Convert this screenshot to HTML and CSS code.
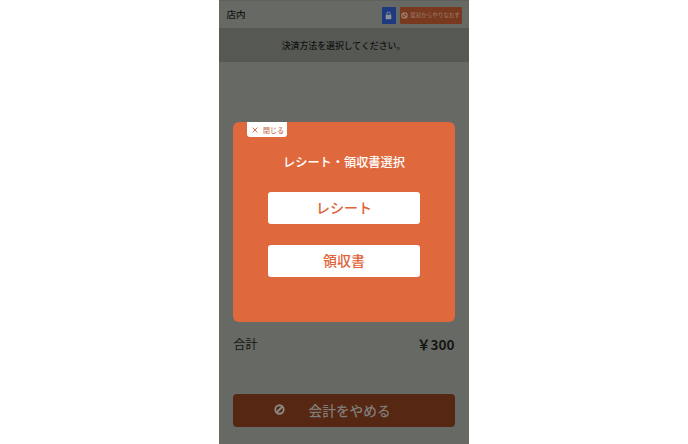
FILE: index.html
```html
<!DOCTYPE html>
<html lang="ja">
<head>
<meta charset="utf-8">
<title>レシート・領収書選択</title>
<link rel="stylesheet" href="styles.css">
</head>
<body>
<main class="phone">
  <header class="topbar">
    <span class="place">店内</span>
    <div class="top-actions">
      <span class="lock">
        <svg viewBox="0 0 10 12" width="7" height="9"><path d="M2.5 5V3.5a2.5 2.5 0 0 1 5 0V5" fill="none" stroke="#8d9096" stroke-width="1.3"/><rect x="1" y="5" width="8" height="6.5" rx="1" fill="#8d9096"/></svg>
      </span>
      <span class="restart">
        <svg viewBox="0 0 12 12" width="7" height="7"><circle cx="6" cy="6" r="4.6" fill="none" stroke="#9c7f70" stroke-width="2"/><path d="M3 3l6 6" stroke="#9c7f70" stroke-width="2"/></svg>
        最初からやりなおす
      </span>
    </div>
  </header>
  <div class="notice">決済方法を選択してください。</div>
  <div class="content">
    <section class="modal">
      <button class="close">
        <svg viewBox="0 0 10 10" width="6" height="6"><path d="M1 1l8 8M9 1l-8 8" stroke="#df6a40" stroke-width="1.6"/></svg>
        閉じる
      </button>
      <h1 class="modal-title">レシート・領収書選択</h1>
      <button class="choice">レシート</button>
      <button class="choice">領収書</button>
    </section>
    <div class="total">
      <span class="total-label">合計</span>
      <span class="total-value">￥300</span>
    </div>
    <button class="cancel">
      <svg class="cancel-icon" viewBox="0 0 12 12" width="11" height="11"><circle cx="6" cy="6" r="4.6" fill="none" stroke="#8c8a84" stroke-width="2"/><path d="M3 9l6-6" stroke="#8c8a84" stroke-width="2"/></svg>
      <span class="cancel-label">会計をやめる</span>
    </button>
  </div>
</main>
</body>
</html>
```
FILE: styles.css
```css
html, body {
  margin: 0;
  height: 100%;
  background: #fff;
}
body {
  display: flex;
  justify-content: center;
  font-family: "Noto Sans CJK JP", "Noto Sans", sans-serif;
  overflow: hidden;
}
.phone {
  width: 250px;
  height: 444px;
  margin-left: -1px;
  background: #666964;
  display: flex;
  flex-direction: column;
  color: #141513;
}
.topbar {
  height: 28px;
  box-sizing: border-box;
  border-top: 1px solid #5f625c;
  display: flex;
  align-items: center;
  justify-content: space-between;
  padding: 0 7px 0 8px;
}
.place {
  font-size: 9.5px;
  font-weight: 500;
  margin-top: -1px;
}
.top-actions {
  display: flex;
  gap: 4px;
  height: 17px;
  margin-top: 1px;
}
.lock, .restart {
  display: flex;
  align-items: center;
  justify-content: center;
  border-radius: 1px;
}
.lock {
  width: 14px;
  background: #1d3a80;
}
.restart {
  width: 62px;
  gap: 2px;
  background: #79391f;
  color: #9c7f70;
  font-size: 5.5px;
  white-space: nowrap;
}
.notice {
  height: 34px;
  background: #565853;
  display: flex;
  align-items: center;
  justify-content: center;
  font-size: 8.9px;
  font-weight: 500;
  color: #111210;
}
.content {
  flex: 1;
  padding: 60px 14px 0;
  display: flex;
  flex-direction: column;
}
.modal {
  position: relative;
  height: 200px;
  background: #df693d;
  border-radius: 6px;
  display: flex;
  flex-direction: column;
  align-items: center;
}
.close {
  position: absolute;
  top: 0;
  left: 14px;
  width: 40px;
  height: 15px;
  padding: 0 0 0 3px;
  border: 0;
  background: #fff;
  border-radius: 0 0 3px 3px;
  color: #c9775c;
  font: 500 7px "Noto Sans CJK JP", sans-serif;
  display: flex;
  align-items: center;
  justify-content: center;
  gap: 5px;
}
.modal-title {
  margin: 31px 0 20px;
  padding-left: 1px;
  height: 19px;
  line-height: 19px;
  font-size: 12.2px;
  font-weight: 500;
  color: #fff;
}
.choice {
  width: 152px;
  height: 32px;
  margin-bottom: 21px;
  padding: 0 0 2px 1px;
  border: 0;
  border-radius: 3px;
  background: #fff;
  color: #df6338;
  font: 500 14px "Noto Sans CJK JP", sans-serif;
}
.total {
  margin-top: 11px;
  height: 21px;
  display: flex;
  align-items: center;
  justify-content: space-between;
  padding-left: 1px;
}
.total-label {
  font-size: 12px;
}
.total-value {
  font-size: 13.5px;
  font-weight: 700;
  font-family: "Noto Sans CJK JP", sans-serif;
}
.cancel {
  margin-top: 40px;
  height: 33px;
  padding: 0 0 2px 41px;
  border: 0;
  border-radius: 4px;
  background: #562713;
  color: #7f7d77;
  display: flex;
  align-items: center;
  gap: 24px;
  font: 500 13.7px "Noto Sans CJK JP", sans-serif;
}
```
